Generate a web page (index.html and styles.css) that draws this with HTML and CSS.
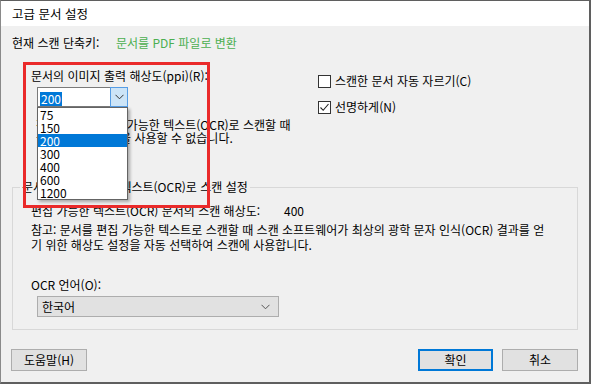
FILE: index.html
```html
<!DOCTYPE html>
<html lang="ko">
<head>
<meta charset="utf-8">
<title>고급 문서 설정</title>
<link rel="stylesheet" href="styles.css">
</head>
<body>
<div class="window">
  <div class="titlebar">고급 문서 설정</div>
  <div class="content">
    <div class="shortcut"><span class="shortcut-label">현재 스캔 단축키:</span><span class="green">문서를 PDF 파일로 변환</span></div>
    <div class="top">
      <div class="left-col">
        <div class="lbl">문서의 이미지 출력 해상도(ppi)(R):</div>
        <div class="combo">
          <span class="combo-text"><span class="sel">200</span></span>
          <span class="combo-btn"><svg width="9" height="6" viewBox="0 0 9 6"><path d="M0.5 0.8 L4.5 4.8 L8.5 0.8" fill="none" stroke="#333" stroke-width="1"/></svg></span>
          <ul class="droplist">
            <li>75</li><li>150</li><li class="active">200</li><li>300</li><li>400</li><li>600</li><li>1200</li>
          </ul>
        </div>
        <p class="note">참고: 문서를 편집 가능한 텍스트(OCR)로 스캔할 때<br>높은 해상도 설정을 사용할 수 없습니다.</p>
      </div>
      <div class="right-col">
        <div class="check"><span class="box"></span><span>스캔한 문서 자동 자르기(C)</span></div>
        <div class="check"><span class="box"><svg width="11" height="11" viewBox="0 0 11 11"><path d="M1.5 5.5 L4.2 8.3 L9.5 2" fill="none" stroke="#222" stroke-width="1.1"/></svg></span><span>선명하게(N)</span></div>
      </div>
    </div>
    <fieldset class="group">
      <legend>문서를 편집 가능한 텍스트(OCR)로 스캔 설정</legend>
      <div class="res-row"><span class="res-label">편집 가능한 텍스트(OCR) 문서의 스캔 해상도:</span><span>400</span></div>
      <p class="note2">참고: 문서를 편집 가능한 텍스트로 스캔할 때 스캔 소프트웨어가 최상의 광학 문자 인식(OCR) 결과를 얻<br>기 위한 해상도 설정을 자동 선택하여 스캔에 사용합니다.</p>
      <div class="lbl ocr-lbl">OCR 언어(O):</div>
      <div class="select"><span>한국어</span><svg width="9" height="6" viewBox="0 0 9 6"><path d="M0.5 0.8 L4.5 4.8 L8.5 0.8" fill="none" stroke="#555" stroke-width="1"/></svg></div>
    </fieldset>
    <div class="buttons">
      <button class="btn help">도움말(H)</button>
      <div class="spacer"></div>
      <button class="btn primary">확인</button>
      <button class="btn">취소</button>
    </div>
  </div>
  <div class="annot"></div>
</div>
</body>
</html>
```

FILE: styles.css
```css
* { box-sizing: border-box; }
html, body { margin: 0; padding: 0; }
body {
  width: 591px;
  height: 384px;
  overflow: hidden;
  font-family: "Noto Sans CJK KR", "Noto Sans", sans-serif;
  font-size: 12px;
  color: #000;
}
.window {
  position: relative;
  width: 591px;
  height: 384px;
  background: #f0f0f0;
  border-top: 1px solid #5f5f5f;
  border-left: 1px solid #8a8a8a;
  border-right: 2px solid #5f5f5f;
  border-bottom: 2px solid #5f5f5f;
  display: flex;
  flex-direction: column;
}
.titlebar {
  flex: none;
  height: 25px;
  background: #fff;
  padding-left: 11px;
  display: flex;
  align-items: center;
  font-size: 12.5px;
  color: #000;
}
.content {
  flex: none;
  padding: 0 11px;
  display: flex;
  flex-direction: column;
}
.shortcut {
  margin-top: 9px;
  line-height: 16px;
  height: 16px;
  display: flex;
}
.shortcut-label { width: 104px; }
.green { color: #4caf50; }
.top {
  margin-top: 17px;
  display: grid;
  grid-template-columns: 305px 1fr;
  height: 111px;
}
.left-col { padding-left: 19px; }
.lbl { line-height: 16px; height: 16px; }
.combo {
  position: relative;
  margin-top: 3px;
  margin-left: 6px;
  width: 91px;
  height: 20px;
  border: 1px solid #7a7a7a;
  background: #fff;
  display: flex;
}
.combo-text {
  flex: 1;
  padding: 2px 0 0 2px;
}
.sel {
  display: inline-block;
  background: #0078d7;
  color: #fff;
  line-height: 14px;
  padding: 0 1px;
}
.combo-btn {
  width: 18px;
  margin: -1px -1px -1px 0;
  background: #cce4f7;
  border: 1px solid #569de5;
  display: flex;
  align-items: center;
  justify-content: center;
}
.droplist {
  position: absolute;
  left: -1px;
  top: 19px;
  width: 91px;
  margin: 0;
  padding: 0;
  list-style: none;
  background: #fff;
  border: 1px solid #646464;
  box-shadow: 2px 2px 3px rgba(0,0,0,0.3);
  z-index: 2;
}
.droplist li {
  height: 13px;
  line-height: 13px;
  padding-left: 2px;
}
.droplist li.active { background: #0078d7; color: #fff; }
.note {
  margin: 11px 0 0 5px;
  line-height: 13px;
  white-space: nowrap;
}
.right-col {
  padding-left: 1px;
  padding-top: 5px;
  display: flex;
  flex-direction: column;
  gap: 10px;
}
.check {
  display: flex;
  align-items: center;
  line-height: 16px;
  height: 16px;
}
.box {
  width: 13px;
  height: 13px;
  border: 1px solid #333;
  background: #fff;
  margin-right: 4px;
  display: flex;
  align-items: center;
  justify-content: center;
}
.group {
  margin: 0;
  padding: 0 18px 12px 18px;
  border: 1px solid #d8d8d8;
  min-width: 0;
}
.group legend {
  margin-left: -11px;
  padding: 0 2px;
  line-height: 16px;
}
.res-row {
  margin-top: 8px;
  display: flex;
  line-height: 16px;
}
.res-label { width: 253px; }
.note2 {
  margin: 3px 0 0 0;
  line-height: 15px;
  white-space: nowrap;
}
.ocr-lbl { margin-top: 25px; }
.select {
  margin: 3px 0 0 6px;
  width: 242px;
  height: 21px;
  background: #e1e1e1;
  border: 1px solid #adadad;
  display: flex;
  align-items: center;
  justify-content: space-between;
  padding: 0 8px 0 4px;
}
.buttons {
  margin-top: 19px;
  display: flex;
  gap: 9px;
  margin-left: -1px;
}
.spacer { flex: 1; }
.btn {
  width: 76px;
  height: 22px;
  font-family: inherit;
  font-size: 12px;
  color: #000;
  background: #e1e1e1;
  border: 1px solid #adadad;
  padding: 0;
  line-height: 18px;
}
.btn.primary { border: 2px solid #0078d7; width: 75px; }
.annot {
  position: absolute;
  left: 22px;
  top: 61px;
  width: 187px;
  height: 146px;
  border: 3px solid #ea2a2a;
  z-index: 3;
  pointer-events: none;
}
```
